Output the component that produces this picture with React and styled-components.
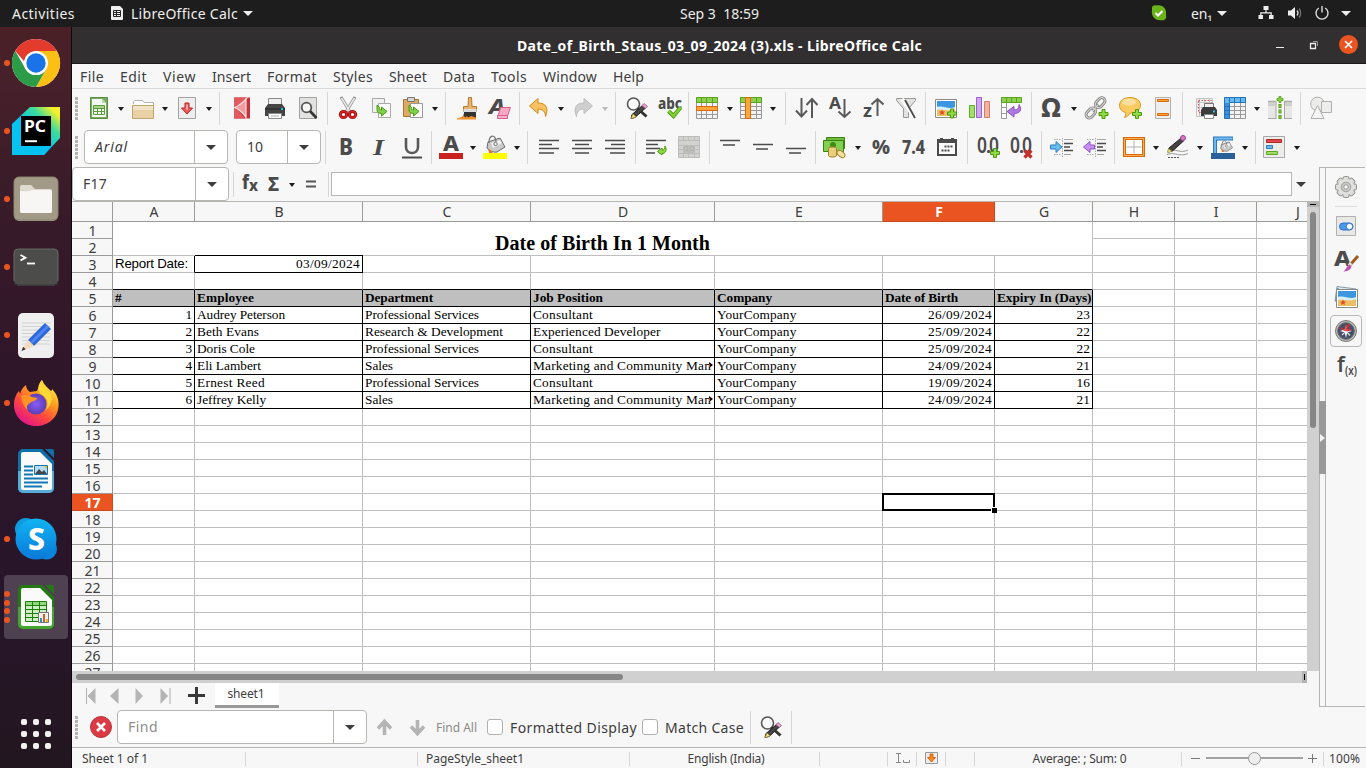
import React, { useLayoutEffect, useRef } from "react";
import styled, { createGlobalStyle, css } from "styled-components";

const UI = `"Noto Sans", "Open Sans", sans-serif`;
const ORANGE = "#e95420";
const INK = "#3d3d3d";
const EDGE = "#b6b6b3";

const Global = createGlobalStyle`
  * { box-sizing: border-box; }
  html, body { margin: 0; padding: 0; overflow: hidden; }
  body { font-family: ${UI}; font-size: 14px; color: ${INK}; background: #f7f7f7; }
  svg { display: block; flex: none; overflow: visible; }
`;

/* Text whose tracking is adjusted so that it fills a given width. */
const LabelText = styled.span`
  display: inline-block;
  flex: none;
  white-space: pre;
`;
function Label({ w, children, className }) {
  const ref = useRef(null);
  useLayoutEffect(() => {
    const el = ref.current;
    el.style.letterSpacing = "0px";
    const n = Array.from(el.textContent).length;
    const natural = el.getBoundingClientRect().width;
    const step = (w - natural) / n;
    el.style.letterSpacing = `${step}px`;
  }, [w, children]);
  return <LabelText ref={ref} className={className}>{children}</LabelText>;
}

/* ---------- frame ---------- */
const Screen = styled.div`
  width: 1366px; height: 768px; display: flex; flex-direction: column; overflow: hidden; background: #f7f7f7;
`;
const Gap = styled.div`flex: none; width: ${(p) => p.$w}px;`;
const Spring = styled.div`flex: 1;`;
const TopBar = styled.header`
  height: 27px; flex: none; display: flex; align-items: center; background: #1d1d1d; color: #eeeeec; padding: 0 15px 1px 12px;
`;
const Below = styled.div`flex: 1; display: flex; min-height: 0;`;
const Dock = styled.nav`
  width: 72px; flex: none; display: flex; flex-direction: column; padding-top: 2px; border-right: 1px solid #0d060c;
  background: linear-gradient(#4a2026 0, #46202a 60px, #391b29 170px, #2f1629 350px, #2b162a 480px, #27152a 560px, #241622 700px, #22171f 741px);
`;
const DockItem = styled.div`
  height: 68px; flex: none; position: relative; display: flex; align-items: center; justify-content: center;
`;
const DockTile = styled.div`
  width: 64px; height: 64px; border-radius: 4px; display: flex; align-items: center; justify-content: center;
  background: ${(p) => (p.$active ? "rgba(255,255,255,0.19)" : "transparent")};
`;
const Dots = styled.div`
  position: absolute; left: 4px; top: 0; bottom: 0; display: flex; flex-direction: column; justify-content: center; gap: 2.7px;
  i { width: 6px; height: 6px; border-radius: 50%; background: ${ORANGE}; }
`;
const AppsGrid = styled.div`
  margin: auto auto 19px; display: grid; grid-template-columns: repeat(3, 6px); grid-auto-rows: 6px; gap: 6px;
  i { background: #f2f1f0; border-radius: 2px; }
`;
const Win = styled.main`flex: 1; min-width: 0; display: flex; flex-direction: column;`;
const TitleBar = styled.div`
  height: 37px; flex: none; display: grid; grid-template-columns: 1fr auto 1fr; align-items: center; background: #322f30;
  border-bottom: 1px solid #1b1b1b; color: #fff; font-weight: 700; font-size: 14px; padding-left: 1px;
`;
const WinButtons = styled.div`display: flex; justify-content: flex-end; align-items: center; padding-right: 8px; padding-bottom: 1px;`;
const CloseDot = styled.div`
  width: 19px; height: 19px; border-radius: 50%; background: ${ORANGE}; display: grid; place-items: center;
`;
const MenuBar = styled.div`
  height: 25px; flex: none; display: flex; align-items: center; gap: 16px; padding-left: 8px; border-bottom: 1px solid #dadad8; font-size: 14px;
`;

/* ---------- toolbars ---------- */
const Toolbar = styled.div`
  height: ${(p) => p.$h}px; flex: none; display: flex; align-items: center; padding-bottom: ${(p) => p.$pb || 0}px;
`;
const Handle = styled.div`
  width: 3px; height: 23px; flex: none; margin: 0 ${(p) => p.$after}px 0 3px;
  background: repeating-linear-gradient(#b4b4b2 0 3px, transparent 3px 4px);
`;
const Btn = styled.div`
  width: ${(p) => p.$w || 33}px; height: 30px; flex: none; display: flex; align-items: center; justify-content: center;
`;
const ArrowBox = styled.div`
  width: ${(p) => p.$w || 11}px; flex: none; display: flex; justify-content: center; padding-top: 2px;
  &::before {
    content: ""; border: solid transparent; border-width: 4px 3.5px 0; border-top-color: ${(p) => (p.$off ? "#b9b9b9" : "#1c1c1c")};
  }
`;
const SepBox = styled.div`
  width: ${(p) => p.$w}px; height: ${(p) => p.$h || 33}px; flex: none; display: flex; justify-content: center;
  &::before { content: ""; width: 1px; height: 100%; background: #d6d6d4; }
`;
const Caret = styled.i`
  flex: none; border: solid transparent; border-width: 5px 5px 0; border-top-color: ${(p) => p.$c || INK};
`;
const Combo = styled.div`
  width: ${(p) => p.$w}px; height: 34px; flex: none; display: flex; background: #fff; border: 1px solid ${EDGE}; border-radius: 4px;
`;
const ComboText = styled.div`
  flex: 1; display: flex; align-items: center; padding: 0 0 1px 10px; color: ${(p) => (p.$hint ? "#8e8e8e" : INK)};
  font-style: ${(p) => (p.$italic ? "italic" : "normal")};
`;
const ComboArrow = styled.div`
  width: ${(p) => p.$w || 33}px; display: flex; align-items: center; justify-content: center; border-left: 1px solid ${EDGE};
`;
const FormulaInput = styled.div`
  flex: none; width: 961px; height: 24px; background: #fff; border: 1px solid ${EDGE};
`;

/* ---------- sheet ---------- */
const Middle = styled.div`flex: none; height: 542px; display: flex;`;
const Left = styled.div`width: 1247px; flex: none; display: flex; flex-direction: column;`;
const SheetArea = styled.div`height: 470px; display: flex; border-top: 1px solid ${EDGE};`;
const SheetGrid = styled.div`
  width: 1235px; height: 469px; overflow: hidden; display: grid; background: #fff;
  grid-template-columns: 41px 82px 168px 168px 184px 168px 112px 98px 82px 82px 82px;
  grid-template-rows: 20px; grid-auto-rows: 17px;
`;
const Head = styled.div`
  display: flex; align-items: center; justify-content: center; font-size: 14px; line-height: 16px; overflow: hidden; padding: 1px 0 0 1px;
  background: ${(p) => (p.$on ? ORANGE : "#f7f7f7")}; color: ${(p) => (p.$on ? "#fff" : INK)}; font-weight: ${(p) => (p.$on ? 700 : 400)};
  border-right: 1px solid ${(p) => (p.$on ? "#c94a1e" : "#9a9a98")}; border-bottom: 1px solid ${(p) => (p.$on ? "#c94a1e" : "#9a9a98")};
`;
const Cell = styled.div`
  position: relative; display: flex; align-items: center; white-space: pre; min-width: 0;
  justify-content: ${(p) => (p.$right ? "flex-end" : "flex-start")};
  padding: 0 2px 1px; font: ${(p) => (p.$bold ? 700 : 400)} 13.33px/16px "Liberation Serif", serif; color: #000;
  background: ${(p) => (p.$bold ? "#bfbfbf" : "#fff")};
  border-right: 1px solid ${(p) => (p.$rb ? "#000" : "#bfbfbf")};
  border-bottom: 1px solid ${(p) => (p.$bb ? "#000" : "#bfbfbf")};
  ${(p) => p.$topLine && css`box-shadow: 0 -1px #000;`}
  ${(p) => p.$sans && css`font-family: "Liberation Sans", sans-serif;`}
`;
const Overflow = styled.i`
  position: absolute; right: 1px; top: 4px; border: solid transparent; border-width: 3.5px 0 3.5px 4px; border-left-color: #000;
  &::before { content: ""; position: absolute; left: -4px; top: -1px; width: 1px; height: 3px; background: #d33; }
`;
const Merged = styled.div`
  grid-column: 2 / 9; grid-row: 2 / 4; display: flex; align-items: flex-end; justify-content: center;
  border-right: 1px solid #bfbfbf; border-bottom: 1px solid #bfbfbf;
  font: 700 20px/24px "Liberation Serif", serif; color: #000;
`;
const Cursor = styled.div`
  position: absolute; z-index: 2; left: -1px; top: -1px; width: 113px; height: 18px; border: 2px solid #000;
  &::after {
    content: ""; position: absolute; right: -4px; bottom: -4px; width: 5px; height: 5px; background: #000; box-shadow: -1px -1px 0 #fff;
  }
`;
const VScroll = styled.div`
  width: 12px; background: #d0d0d0; display: flex; flex-direction: column; align-items: center;
  &::before { content: ""; width: 100%; height: 5px; background: linear-gradient(#000, #000) center 2px / 6px 1px no-repeat #b4b4b4; }
  &::after { content: ""; margin: 5px 0 0; width: 6px; height: 216px; border-radius: 3px; background: #868686; }
`;
const HScroll = styled.div`
  width: 1235px; height: 12px; background: #d0d0d0; display: flex; align-items: center; justify-content: space-between; padding-left: 4px;
  &::before { content: ""; width: 547px; height: 6px; border-radius: 3px; background: #868686; }
  &::after { content: ""; width: 5px; height: 12px; background: linear-gradient(#000, #000) 2px center / 1px 6px no-repeat #b4b4b4; }
`;
const Tabs = styled.div`height: 25px; display: flex; align-items: center;`;
const Tab = styled.div`
  width: 64px; height: 25px; background: #fff; border-bottom: 3px solid #999; display: flex; align-items: center; justify-content: center; font-size: 12px;
  padding: 0 2px 1px 0;
`;
const Splitter = styled.div`
  width: 7px; height: 540px; flex: none; border: 1px solid ${EDGE}; padding-top: 233px;
`;
const Grip = styled.div`
  height: 73px; margin: 0 -1px; background: #999; display: flex; align-items: center; padding-left: 1px;
  &::before { content: ""; border: solid transparent; border-width: 4px 0 4px 5px; border-left-color: #f4f4f4; }
`;
const Sidebar = styled.aside`
  width: 39px; height: 540px; flex: none; border-top: 1px solid ${EDGE}; border-bottom: 1px solid ${EDGE};
  display: flex; flex-direction: column; align-items: center; padding: 3px 0 0 0;
`;
const SideBtn = styled.div`
  width: 32px; height: 32px; flex: none; margin-bottom: ${(p) => p.$mb ?? 3}px; border-radius: 4px; display: grid; place-items: center;
  border: 1px solid ${(p) => (p.$on ? "#b9b9b7" : "transparent")};
`;
const SideLine = styled.div`width: 22px; height: 1px; background: #dcdcda; margin: 0 0 3px;`;
const Check = styled.i`width: 16px; height: 16px; flex: none; border: 1px solid #b0b0ae; border-radius: 3px; background: #fff;`;
const FindAll = styled.div`font-size: 12px; color: #8c8c8a; display: flex;`;
const StatusBar = styled.footer`
  flex: 1; display: flex; align-items: stretch; border-top: 1px solid ${EDGE}; font-size: 12px; padding-top: 1px;
`;
const Stat = styled.div`
  width: ${(p) => p.$w}px; flex: none; display: flex; align-items: center; justify-content: ${(p) => (p.$c ? "center" : "flex-start")};
  padding-left: ${(p) => p.$pl || 0}px; background: linear-gradient(#d6d6d4, #d6d6d4) right center / 1px 14px no-repeat; padding-bottom: 1px;
`;
const StatEnd = styled.div`display: flex; align-items: center; padding-bottom: 1px;`;
const Slider = styled.div`
  width: 97px; height: 2px; background: #a3a3a1; margin: 0 5px; display: flex; align-items: center; justify-content: center;
  &::before { content: ""; width: 11px; height: 11px; border-radius: 50%; border: 1px solid #999; background: #efefef; }
`;

/* ---------- icons ---------- */
const Svg = ({ s = 24, children, h }) => (
  <svg width={s} height={h || s} viewBox={`0 0 ${s} ${h || s}`} fill="none">{children}</svg>
);
/* A letter used as an icon: t is the letter, x its left side, w the width it fills. */
const Char = ({ t, x = 0, y = 19, w, size = 22, weight = 800, family = "Noto Sans", italic, fill = "#4b4b4b" }) => (
  <text x={x} y={y} fontFamily={family} fontWeight={weight} fontSize={size} fontStyle={italic ? "italic" : "normal"} fill={fill}
    textLength={w} lengthAdjust="spacingAndGlyphs">{t}</text>
);
const Plus = ({ x = 13, y = 13 }) => (
  <path transform={`translate(${x} ${y})`} d="M3.5.5h3v3h3v3h-3v3h-3v-3h-3v-3h3z" fill="#8fd94a" stroke="#4e9a06" />
);
const Page = ({ children, f = "#eee" }) => (
  <><path d="M3.5 1.5h17v21h-17z" fill={f} stroke="#a2a2a0" />{children}</>
);
const INew = () => <Svg><path d="M3.500 1.500h17v21h-17z" fill="#7da968" stroke="#568f3e" /><path d="M5 3h10l4 4v14H5z" fill="#f4f8f2" /><path d="M15 3v4h4z" fill="#b9d8a8" /><path d="M6.500 9.500h11v9h-11zM6.500 12.500h11M6.500 15.500h11M10.500 9.500v9M14.500 9.500v9" stroke="#5a9e3c" /><path d="M7 10h10v2H7z" fill="#a5d489" /></Svg>;
const IOpen = () => <Svg><path d="M2.500 8V5.500l1-1h8l1.500 2h9.500V12" fill="#fff" stroke="#b5b3ae" /><path d="M1.500 9.500h21v13h-21z" fill="#e9d1a6" stroke="#c0a470" /><path d="M2 10h20v4H2z" fill="#f3e3c6" /></Svg>;
const ISave = () => <Svg><Page><path d="M10 7h4v5h3.500L12 18l-5.500-6H10z" fill="#ef5a5a" stroke="#b82020" /><path d="M11 8.500h2v5h-2z" fill="#f9a0a0" /></Page></Svg>;
const IPdf = () => <Svg><path d="M4 1.500h16v21H4z" fill="#c4333c" /><path d="M4 1.500h13L6 12l9 10.500H4z" fill="#e2595f" /><path d="M16 2L5 11.500 16 21z" fill="#f29a9c" /><path d="M17.500 1.500C14 6 9 10 4.500 11.500 9 12.500 14 18 16.500 22.500M16 2v19" stroke="#fbe3e3" strokeWidth="1.200" /></Svg>;
const IPrint = () => <Svg><path d="M5.500 2.500h13v8h-13z" fill="#eee" stroke="#888" /><path d="M5 8h14l3 4v8H2v-8z" fill="#444" /><path d="M2 12h20v2H2z" fill="#333" /><path d="M18 12h2v2h-2z" fill="#1ec6ee" /><path d="M5.500 17.500h13v5h-13z" fill="#fff" stroke="#888" /><path d="M8 20h8" stroke="#aaa" /></Svg>;
const IPreview = () => <Svg><Page f="#e2e2e0"><circle cx="10.500" cy="11.500" r="4.800" fill="#f7f7f7" stroke="#555" strokeWidth="1.800" /><path d="M14 15l6.500 7" stroke="#333" strokeWidth="2.600" /></Page></Svg>;
const ICut = () => <Svg><path d="M5 1l9 15M19 1l-9 15" stroke="#8d8d8d" strokeWidth="3" /><path d="M5.500 2l8 13M18.500 2l-8 13" stroke="#e9e9e9" strokeWidth="1.500" /><ellipse cx="7.500" cy="18.500" rx="3.200" ry="3" stroke="#a80f0f" strokeWidth="3" /><ellipse cx="16.500" cy="18.500" rx="3.200" ry="3" stroke="#a80f0f" strokeWidth="3" /><ellipse cx="7.500" cy="18.500" rx="3.200" ry="3" stroke="#dc2a2a" strokeWidth="1.200" /><ellipse cx="16.500" cy="18.500" rx="3.200" ry="3" stroke="#dc2a2a" strokeWidth="1.200" /></Svg>;
const CopyArrow = () => <path d="M8 9v4.500c0 2.500 1.500 4 4.500 4V20l5.500-4.500-5.500-4.500v3c-1.500 0-2-.5-2-2.500z" fill="#7fd24a" stroke="#469a12" />;
const ICopy = () => <Svg><path d="M3.500 2.500h12v14h-12z" fill="#f1f1f1" stroke="#a8a8a6" /><path d="M9.500 7.500h12v14h-12z" fill="#fff" stroke="#a8a8a6" /><CopyArrow /></Svg>;
const IPaste = () => <Svg><path d="M2.500 3.500h15v17h-15z" fill="#dcaa62" stroke="#a87533" /><path d="M6.500 1.500h7v4h-7z" fill="#d5d5d3" stroke="#777" /><path d="M9.500 7.500h12v14h-12z" fill="#fff" stroke="#999" /><CopyArrow /></Svg>;
const IBrush = () => <Svg><path d="M13.500 1.500h3l.5 9h4.500v5h-13v-5H13z" fill="#e9b56e" stroke="#b27a2d" /><path d="M8.500 13h13v3h-13z" fill="#ddd" /><path d="M9 16h12v6c-6 1-10 0-17 .5 4-1 5-3 5-6.500z" fill="#333" /><path d="M2 22.500c5-1 7-3 7-3l1 2 2-1.500 1 1.500 3-1.500 5 1.500v2H2z" fill="#f0912c" /></Svg>;
const IClear = () => <Svg><Char t="A" x={1} y={18} size={22} w={16} italic /><path d="M12.500 11.500h10l-3 8.500h-9.500z" fill="#f9a7c3" stroke="#d6608c" /><path d="M9.500 19.500h10v3h-10z" fill="#f7b0c8" stroke="#d6608c" /></Svg>;
const IUndo = ({ off }) => <Svg><g transform={off ? "matrix(-1 0 0 1 24 0)" : undefined}><path d="M11 2.500v4.500c8 0 11 5 7.500 13.500 0-5-3-7.500-7.500-7.500v4.500L2.500 10z" fill={off ? "#cfcfcf" : "#f9c064"} stroke={off ? "#bdbdbd" : "#d18a14"} /></g></Svg>;
const IRefind = () => <Svg><circle cx="8.500" cy="8" r="6" fill="#fafafa" stroke="#555" strokeWidth="1.600" /><path d="M12.500 12.500l9 8" stroke="#333" strokeWidth="3" /><path d="M18 9l3 2.500-11 10-4 1 1-4z" fill="#444" stroke="#222" /><path d="M19 7.500l3.500 3-2 2-3.500-3z" fill="#e6a4cf" stroke="#b069a0" /><path d="M8 18l3 3-5 1.500z" fill="#f5e58a" stroke="#a18d2d" strokeWidth=".6" /></Svg>;
const ISpell = () => <Svg><Char t="abc" x={0} y={13} size={16} w={24} /><path d="M10.500 15l5 5 7-8.500" stroke="#4e9a06" strokeWidth="4" /><path d="M10.500 15l5 5 7-8.500" stroke="#82d13c" strokeWidth="2.200" /></Svg>;
const Mesh = ({ c = "#999" }) => <><path d="M1.500 1.500h21v21h-21z" fill="#f3f3f3" stroke={c} /><path d="M1.500 6.500h21M1.500 10.500h21M1.500 14.500h21M1.500 18.500h21M6.500 1.500v21M11.500 1.500v21M17.500 1.500v21" stroke={c} /></>;
const IRow = () => <Svg><Mesh /><path d="M1.500 1.500h21v5h-21z" fill="#8bd052" stroke="#5aa41c" /><path d="M6.500 2v4M11.500 2v4M17.500 2v4" stroke="#5aa41c" /><path d="M1.500 10.500h21v4h-21z" fill="#fca53a" stroke="#d9690a" /></Svg>;
const ICol = () => <Svg><Mesh /><path d="M1.500 1.500h21v5h-21z" fill="#8bd052" stroke="#5aa41c" /><path d="M6.500 2v4M17.500 2v4" stroke="#5aa41c" /><path d="M6.500 1.500h5v21h-5z" fill="#fca53a" stroke="#d9690a" /></Svg>;
const ISort = () => <Svg><path d="M6.500 2v18M1 14.500l5.500 6 5.500-6M17 22V3M11.500 9L17 3l5.500 6" stroke="#5a5a5a" strokeWidth="2" /></Svg>;
const IAz = () => <Svg><Char t="A" x={1} y={13} size={16} weight={700} w={12} /><path d="M16.500 3v18M10.500 15.500l6 5.500 6-5.500" stroke="#5a5a5a" strokeWidth="2" /></Svg>;
const IZa = () => <Svg><Char t="z" x={1} y={21} size={18} weight={700} w={9} /><path d="M15.500 20V3M9.500 8.500l6-5.500 6 5.500" stroke="#5a5a5a" strokeWidth="2" /></Svg>;
const IFilter = () => <Svg><path d="M2.500 2.500h19v2l-7 8v9h-5v-9l-7-8z" fill="#e2e2e0" stroke="#989896" /><path d="M8 3l13 19" stroke="#fff" strokeWidth="4" /><path d="M11 4l10 18" stroke="#4b4b4b" strokeWidth="1.800" /></Svg>;
const Photo = () => <><path d="M1.500 3.500h21v18h-21z" fill="#fff" stroke="#8a8a88" /><path d="M3 5h18v7H3z" fill="#3d96e0" /><path d="M3 11c6-2 12 3 18 0v3H3z" fill="#d5f0f8" /><path d="M3 14c5-1 12 2 18-1v7H3z" fill="#edbe68" /><path d="M8 13.500l1 2h2L9.500 17l.5 2-2-1-2 1 .5-2L5 15.500h2z" fill="#e3501d" /></>;
const IImage = () => <Svg><Photo /><Plus x={13} y={12.500} /></Svg>;
const IChart = () => <Svg><path d="M2.500 9.500h5v12h-5z" fill="#a3e06b" stroke="#62b02a" /><path d="M9.500 1.500h5v20h-5z" fill="#cfa4f0" stroke="#9a5fd0" /><path d="M17.500 5.500h5v16h-5z" fill="#f3b3a4" stroke="#d47e69" /></Svg>;
const IPivot = () => <Svg><path d="M1.500 6.500h5v16h-5zM1.500 11.500h5M1.500 17.500h5" fill="#fff" stroke="#999" /><path d="M1.500 1.500h20v5h-20zM6.500 2v4M11.500 2v4M16.500 2v4" fill="#8bd052" stroke="#5aa41c" /><path d="M19 8.500c4 6 0 9-5 9V21l-7-5.500 7-5v3.500c3 0 5-1 5-5.500z" fill="#b07be0" stroke="#8a4fc4" /></Svg>;
const ILink = () => <Svg><g transform="rotate(-48 10 12)"><g stroke="#868684" strokeWidth="3"><rect x="-2" y="9" width="11" height="6.500" rx="3.200" /><rect x="12" y="9" width="11" height="6.500" rx="3.200" /><path d="M6 12.200h9" /></g><g stroke="#dcdcda" strokeWidth="1"><rect x="-2" y="9" width="11" height="6.500" rx="3.200" /><rect x="12" y="9" width="11" height="6.500" rx="3.200" /><path d="M6 12.200h9" /></g></g><Plus x={13.500} y={13} /></Svg>;
const IComment = () => <Svg><path d="M12 1.500c6 0 10.500 3 10.500 7.500s-4 8-10 8c-2 3-5 4.500-6 4.500 1-1.500 1.500-3.500 1-5C4 15.500 1.500 13 1.500 9.500c0-5 4.500-8 10.500-8z" fill="#fbcb62" stroke="#d99a22" /><ellipse cx="11" cy="6" rx="7" ry="3.500" fill="#fde0a0" /><Plus x={14} y={13} /></Svg>;
const IHeader = () => <Svg><path d="M4.500 1.500h15v21h-15z" fill="#eee" stroke="#b0b0ae" /><path d="M6.500 3.500h11v2h-11zM6.500 17.500h11v2h-11z" fill="#fca53a" stroke="#d9690a" /></Svg>;
const IPrintArea = () => <Svg><path d="M2.500 2.500h16v18h-16zM5.500 3v17M10.500 3v17M15.500 3v8M3 6.500h15M3 11.500h8" stroke="#c4c4c2" fill="#f2f2f0" /><path d="M4.500 4.500h13v12h-13z" stroke="#e05050" strokeDasharray="1.500 1.500" /><path d="M10.500 7.500h9v5h-9z" fill="#eee" stroke="#777" /><path d="M9 11h12l2 3v6H7v-6z" fill="#3c3c3c" /><path d="M19 14.500h2v2h-2z" fill="#1ec6ee" /><path d="M10.500 18.500h9v4h-9z" fill="#fff" stroke="#888" /></Svg>;
const IFreeze = () => <Svg><Mesh /><path d="M1.500 22.500v-21h21v5h-16v16z" fill="#66b8ef" stroke="#2273b8" /><path d="M2 7h4v15H2z" fill="#3f8fe0" /><path d="M2 10.500h4M2 14.500h4M2 18.500h4M11.500 2v4M17.500 2v4M6.500 2v4" stroke="#2273b8" /></Svg>;
const ISplit = () => <Svg><path d="M0 4h8v19H0zM16 4h8v19h-8z" fill="#e6e6e4" /><path d="M0 5.500h8M16 5.500h8M0 22.500h8M16 22.500h8M8 5v18M16.500 5v18" stroke="#a8a8a6" /><path d="M0 6h7v4H0zM17 6h7v4h-7z" fill="#cfcfcd" /><path d="M12 8v15" stroke="#4e9a06" strokeWidth="3" strokeDasharray="4 1.500" /><path d="M12 8.700v14" stroke="#8fd94a" strokeWidth="1.200" strokeDasharray="2.600 2.900" /><path d="M11 .5h2v2h2v2h-2v2h-2v-2H9v-2h2z" fill="#8fd94a" stroke="#4e9a06" strokeWidth=".8" /></Svg>;
const IShapes = () => <Svg><circle cx="8.500" cy="8" r="6.800" fill="#ececea" stroke="#b0b0ae" /><path d="M12.500 5.500h10v11h-10z" fill="#ededed" stroke="#b0b0ae" /><path d="M8.500 9.500L15 22.500H2z" fill="#f4f4f4" stroke="#b0b0ae" /></Svg>;

const IBold = () => <Svg><Char t="B" x={4} y={20} size={23} w={14} /></Svg>;
const IItalic = () => <Svg><Char t="I" x={6} y={20} size={24} w={11} weight={700} family="Liberation Serif" italic /></Svg>;
const IUnderline = () => <Svg><path d="M6 3v9c0 8 12 8 12 0V3" stroke="#5a5a5a" strokeWidth="2.600" /><path d="M2 22.500h20" stroke="#4b4b4b" strokeWidth="2" /></Svg>;
const IPercent = () => <Svg><Char t="%" x={3} y={19} size={20} w={18} /></Svg>;
const INumber = () => <Svg><Char t="7.4" x={0} y={19} size={20} w={23} /></Svg>;
const IOmega = () => <Svg><Char t="Ω" x={2} y={21} size={26} w={20} /></Svg>;
const ISigma = () => <Svg s={20}><Char t="Σ" x={4} y={17} size={19} w={11} /></Svg>;
const IFontColor = () => <Svg><Char t="A" x={4} y={16} size={22} w={16} /><path d="M0 18h24v6H0z" fill="#c9211e" /></Svg>;
const Bucket = () => <><path d="M5 7l12-4 5 9-8 5c-3 1-9-2-10-4z" fill="#c9c9c9" stroke="#6b6b6b" /><path d="M8 8l9-3 2 3-9 5z" fill="#f1f1f1" /><path d="M6 8C6-1 13-1 13 7" stroke="#777" strokeWidth="1.300" /><circle cx="12.500" cy="9" r="1.700" fill="#eee" stroke="#777" /><path d="M5 13l5 5H6z" fill="#e9742b" /></>;
const IFill = () => <Svg><Bucket /><path d="M0 18h24v6H0z" fill="#ff0" /></Svg>;
const Bars = ({ d }) => <Svg><path d={d} stroke="#4b4b4b" strokeWidth="1.600" /></Svg>;
const IWrap = () => <Svg><path d="M2 5.500h20M2 9.500h12M2 13.500h14M2 18h9" stroke="#4b4b4b" strokeWidth="1.600" /><path d="M21 11c2.500 4 .5 7.500-3 7.500V20l-4.500-3.500L18 13v2c2 0 3-1 3-4z" fill="#8fd94a" stroke="#4e9a06" /></Svg>;
const IMerge = () => <Svg><path d="M1.500 1.500h21v21h-21z" fill="#d2d2d0" stroke="#bcbcba" /><path d="M2 5.500h20M2 18.500h20M6.500 2v4M11.500 2v4M17.500 2v4M6.500 18v4M11.500 18v4M17.500 18v4M2 10.500h4M2 14.500h4M18 10.500h4M18 14.500h4" stroke="#bcbcba" /><path d="M6 10h12v8H6z" fill="#bdbdbb" /><path d="M10 11v5l-3-2.500zM14 11v5l3-2.500z" fill="#cfcfcd" stroke="#a2a2a0" strokeWidth=".6" /></Svg>;
const IMoney = () => <Svg><path d="M4.500 2.500h18v11h-18z" fill="#6cbd3c" stroke="#3a8212" /><path d="M1.500 5.500h20v11h-20z" fill="#82cf52" stroke="#3a8212" /><circle cx="11" cy="10" r="3" fill="#3f8a18" /><path d="M6.500 13.500c0-2 8-2 8 0v7c0 2-8 2-8 0z" fill="#e9cf7c" stroke="#a5822a" /><ellipse cx="19" cy="19" rx="4.500" ry="2.700" transform="rotate(38 19 19)" fill="#f4e1a0" stroke="#a5822a" /></Svg>;
const IDate = () => <Svg><path d="M2 4h3V3h3v1h8V3h3v1h3v17H2z" fill="#4b4b4b" /><path d="M4 8h16v11H4z" fill="#fafafa" /><path d="M9.500 11.500h8M6.500 15.500h8" stroke="#4b4b4b" strokeWidth="2" strokeDasharray="2 1" /></Svg>;
const Dec = ({ children }) => <Svg><Char t="0" x={1} y={18} size={22} weight={600} w={10} /><Char t="." x={10} y={18} size={18} weight={700} /><Char t="0" x={13} y={18} size={22} weight={600} w={10} />{children}</Svg>;
const IDecAdd = () => <Dec><Plus x={14} y={13} /></Dec>;
const IDecDel = () => <Dec><path d="M15.500 15.500l7 7M22.500 15.500l-7 7" stroke="#c4302c" strokeWidth="3.200" /></Dec>;
const IIndent = ({ out }) => <Svg><path d="M14 4.500h9M14 19.500h7" stroke="#a5a5a3" /><path d="M14 8.500h9M14 12h6M14 15.500h9" stroke="#4b4b4b" strokeWidth="1.700" /><path d="M4 4.500h7M4 19.500h7M12.500 3v19" stroke="#aaa" strokeDasharray="1.500 1" /><path d={out ? "M11.500 10v4H7v3.500L.5 12 7 6.500V10z" : "M.5 10v4H6v3.500l6-5.500-6-5.500V10z"} fill={out ? "#c58ff0" : "#66bdf0"} stroke={out ? "#9350c8" : "#2d7fbe"} /></Svg>;
const IBorder = () => <Svg><path d="M2.500 3.500h19v17h-19z" fill="#fff" stroke="#d9690a" strokeWidth="3" /><path d="M2.500 3.500h19v17h-19z" stroke="#fcb055" strokeWidth="1" /><path d="M12 5.500v13M4.500 12h15" stroke="#b0b0ae" /></Svg>;
const IPen = () => <Svg><path d="M2 16c8-3 12 3 20-1M1 19.500c8-3 13 3 21-1" stroke="#999" /><path d="M2 22.500h12" stroke="#555" strokeDasharray="2 1" /><path d="M14.500 3.500l3 2.500L6.500 16 2 17l1-4z" fill="#444" stroke="#222" /><circle cx="17" cy="3" r="2.500" fill="#d877c4" stroke="#97438a" /><path d="M2.500 13.500l3.500 3-4.500 1z" fill="#f5e58a" stroke="#a18d2d" strokeWidth=".6" /></Svg>;
const IBorderColor = () => <Svg><path d="M4 19V3.500h18" stroke="#2879c0" strokeWidth="4" /><path d="M4 18V3.500h17.500" stroke="#75bdf0" strokeWidth="1.800" /><g transform="translate(7 5) scale(.66)"><Bucket /></g><path d="M0 18h24v6H0z" fill="#2a6099" /></Svg>;
const ICond = () => <Svg><path d="M1.500 1.500h21v21h-21z" fill="#ececea" stroke="#a8a8a6" /><path d="M4.500 4.500h15v3h-15z" fill="#d94b4b" stroke="#b02a2a" /><path d="M4.500 10.500h6v3h-6z" fill="#6bb7e8" stroke="#2d7fbe" /><path d="M4.500 16.500h11v3h-11z" fill="#a3dc6a" stroke="#5aa41c" /></Svg>;

const gearTeeth = Array.from({ length: 8 }, (_, i) => <rect key={i} x="9" y="1.500" width="6" height="6" rx="1.500" transform={`rotate(${i * 45} 12 12)`} fill="#dcdcda" stroke="#8f8f8d" />);
const IGear = () => <Svg>{gearTeeth}<circle cx="12" cy="12" r="8.300" fill="#e0e0de" /><circle cx="12" cy="12" r="4.800" fill="#c8c8c6" stroke="#a0a09e" /><circle cx="12" cy="12" r="2.200" fill="#f7f7f7" stroke="#999" /></Svg>;
const IProps = () => <Svg><path d="M2.500 2.500h19v19h-19z" fill="#e8e8e6" stroke="#b0b0ae" /><rect x="5.500" y="9" width="13.500" height="7" rx="3.500" fill="#4a98ee" stroke="#2a72c8" /><circle cx="15.500" cy="12.500" r="3.200" fill="#fff" stroke="#2a72c8" /></Svg>;
const IStyles = () => <Svg><Char t="A" x={0} y={17} size={22} w={17} /><path d="M24 7l-8 9" stroke="#9c5a1c" strokeWidth="3" /><path d="M17 14l-2 3" stroke="#ddd" strokeWidth="3.500" /><path d="M15.500 15.500l2 2c-1 4-5 5-8 5 2-1 3-5 6-7z" fill="#c050b0" /></Svg>;
const IGallery = () => <Svg><path d="M3 2.500L22 5l-2 14L1 17z" fill="#dfe9ee" stroke="#8a9aa4" /><path d="M4 4L2 17" stroke="#3d96e0" strokeWidth="1.500" /><g transform="translate(1 2)"><Photo /></g></Svg>;
const ICompass = () => <Svg><circle cx="12" cy="12" r="10.500" fill="#bcbcba" stroke="#7a7a78" /><circle cx="12" cy="12" r="8.300" fill="#46506a" stroke="#666" /><path d="M12 6l1.300 4.500L18 12l-4.700 1.300L12 19l-1.300-5.700L6 12l4.700-1.500z" fill="#fff" /><path d="M12 12l3.500-7M5.500 8.500L12 12M12 12l5-1.500M12 5.500V12" stroke="#e02c2c" strokeWidth="1.400" /><path d="M8 16l4-4 4 4.500" stroke="#dfe3ec" strokeWidth="1.200" /></Svg>;
const IFx = () => <Svg><Char t="f" x={3} y={18} size={21} weight={600} /><Char t="(x)" x={11} y={21} size={12} weight={600} w={12} /></Svg>;

/* dock pictures */
const DChrome = () => (
  <Svg s={48}><circle cx="24" cy="24" r="24" fill="#fff" />
    <path d="M24 24L3.200 12A24 24 0 0 1 44.800 12z" fill="#e33b2e" />
    <path d="M24 12h20.800A24 24 0 0 1 24 48l10.400-18z" fill="#fcc015" />
    <path d="M3.200 12A24 24 0 0 0 24 48l10.400-18A12 12 0 0 1 13.600 30z" fill="#2d9c49" />
    <path d="M3.200 12h41.600L24 12v12H13.600z" fill="#e33b2e" />
    <circle cx="24" cy="24" r="12" fill="#fff" /><circle cx="24" cy="24" r="9.700" fill="#1a73e8" /></Svg>
);
const DPyCharm = () => (
  <Svg s={48}><defs><linearGradient id="pc" x1="0" y1="1" x2="1" y2="0"><stop offset=".45" stopColor="#07c3f2" /><stop offset=".7" stopColor="#3ddc9a" /><stop offset=".9" stopColor="#f3f02b" /></linearGradient></defs>
    <path d="M0 17L18 0h30v31L32 48H0z" fill="url(#pc)" /><path d="M0 17L17 9v31L0 48zM9 39h31l-8 9H0z" fill="#07c3f2" /><path d="M9 9h30v30H9z" fill="#000" />
    <Char t="PC" x={12} y={24.5} size={16.5} weight={700} w={22} fill="#fff" /><path d="M13 34.200h12" stroke="#fff" strokeWidth="2" /></Svg>
);
const DFiles = () => (
  <Svg s={48}><rect x="2" y="2" width="44" height="44" rx="5" fill="#a09a86" /><rect x="2" y="2" width="44" height="43" rx="5" stroke="#8a8470" /><path d="M8 12a2 2 0 0 1 2-2h9l4 4h15a2 2 0 0 1 2 2v20a2 2 0 0 1-2 2H10a2 2 0 0 1-2-2z" fill="#dedad0" /><path d="M8 16c4 0 9 1 12-1h18a2 2 0 0 1 2 2v19a2 2 0 0 1-2 2H10a2 2 0 0 1-2-2z" fill="#f7f6f4" /></Svg>
);
const DTerm = () => (
  <Svg s={48}><rect x="2" y="6" width="44" height="36" rx="4" fill="#4c4c4a" stroke="#686866" /><path d="M2 38a4 4 0 0 0 4 4h36a4 4 0 0 0 4-4" stroke="#2c2c2a" /><path d="M8.500 12l5 2.700-5 2.700" stroke="#fff" strokeWidth="1.800" /><path d="M15 20.500h8" stroke="#fff" strokeWidth="1.800" /></Svg>
);
const DEdit = () => (
  <Svg s={48}><rect x="6" y="2" width="36" height="45" rx="5" fill="#efefef" /><path d="M10 12h28M10 15.500h28M10 19h28M10 22.500h28M10 26h28M10 29.500h28M10 33h28" stroke="#d2d2d2" />
    <path d="M33 12l6 6-17 17-6-6z" fill="#2f66d8" /><path d="M35 14l2 2-17 17-2-2z" fill="#4c86f0" /><path d="M16 29l6 6-12.500 5z" fill="#f5d9bc" /><path d="M11.200 35.800l2.500 2.500-4.200 1.700z" fill="#333" /></Svg>
);
const DFirefox = () => (
  <Svg s={48}><defs><linearGradient id="ff" x1=".9" y1=".1" x2=".3" y2="1"><stop offset="0" stopColor="#fff44f" /><stop offset=".35" stopColor="#ff9a1f" /><stop offset=".65" stopColor="#ff4a3d" /><stop offset="1" stopColor="#e31587" /></linearGradient><radialGradient id="fp"><stop offset="0" stopColor="#8a5cf5" /><stop offset="1" stopColor="#5b3fb5" /></radialGradient></defs>
    <path d="M30 1c2 5 6 8 9 11 1-1 1-1 1-2 5 5 7 11 6.500 17C46 39 36 47 24 47S2 38 2 26c0-6 2-11 5-14l1 3c1-4 3-7 6-9 0 3 2 6 4 7l7-1c2-4 2-8 5-11z" fill="url(#ff)" />
    <circle cx="24" cy="25" r="10.500" fill="url(#fp)" /><path d="M30 1c-5 5-4 11-1 14 7 4 8 9 5 16 4-3 7-10 5-15s-8-8-9-15z" fill="#ffd935" /><path d="M9 17c4-2 8-1 11 1l5 1c0 3-5 3-7 5-3 2-4 4-2 7-5-3-6-9-7-14z" fill="#ff9422" /></Svg>
);
const Doc = ({ a, b, children }) => (
  <Svg s={48}><path d="M11 2h19l12 12v27a5 5 0 0 1-5 5H11a5 5 0 0 1-5-5V7a5 5 0 0 1 5-5z" fill={a} /><path d="M6 24h36v17a5 5 0 0 1-5 5H11a5 5 0 0 1-5-5z" fill={b} /><path d="M33 2h7a2 2 0 0 1 2 2v7z" fill={a} /><path d="M11 5h17l12 12v24a2 2 0 0 1-2 2H11a2 2 0 0 1-2-2V7a2 2 0 0 1 2-2z" fill="#fafafa" />{children}</Svg>
);
const DWriter = () => (
  <Doc a="#0f6fa8" b="#56aed8"><path d="M12 19.500h9M12 23.500h9M12 27.500h9M12 31.500h24M12 35.500h24M12 39.500h18" stroke="#1179b4" strokeWidth="2" /><path d="M22.500 18.500h13v9h-13z" fill="#b6dcf2" stroke="#1179b4" /><path d="M23 27l4-5 3 3 2-2 3 4z" fill="#444" /><path d="M32 19h3v3z" fill="#f6b41c" /></Doc>
);
const DSkype = () => (
  <Svg s={48}><defs><linearGradient id="sk" x1="0" y1="0" x2="0" y2="1"><stop offset="0" stopColor="#11b4f2" /><stop offset="1" stopColor="#0a78d8" /></linearGradient></defs>
    <circle cx="14" cy="14" r="11" fill="#0e9be0" /><circle cx="34.500" cy="34" r="10.500" fill="#0c84dc" /><circle cx="24" cy="24" r="20.500" fill="url(#sk)" /><Char t="S" x={16} y={35} size={31} w={17} fill="#fff" /></Svg>
);
const DCalc = () => (
  <Doc a="#237a14" b="#42a52f"><path d="M13.500 18.500h21v20h-21z" fill="#cdeec0" stroke="#1f7d0e" /><path d="M14 19h20v3H14z" fill="#8fd97a" /><path d="M13.500 22.500h21M13.500 26.500h21M13.500 30.500h21M13.500 34.500h21M20.500 18.500v20M27.500 18.500v20" stroke="#1f7d0e" /><path d="M26.500 29.500h10v10h-10z" fill="#f2f2f2" stroke="#777" /><path d="M28 35h2v4h-2z" fill="#2c8fd4" /><path d="M31 31h2v8h-2z" fill="#d9601a" /><path d="M34 36h2v3h-2z" fill="#f0b81c" /></Doc>
);

/* ---------- data ---------- */
const dock = [
  [DChrome, 1], [DPyCharm, 1], [DFiles, 1], [DTerm, 1], [DEdit, 1], [DFirefox, 1], [DWriter, 0], [DSkype, 1], [DCalc, 4],
];
const menus = [["File", 24], ["Edit", 27], ["View", 33], ["Insert", 39], ["Format", 50], ["Styles", 40], ["Sheet", 38], ["Data", 32], ["Tools", 36], ["Window", 54], ["Help", 31]];
const columns = ["A", "B", "C", "D", "E", "F", "G", "H", "I", "J"];
const headings = [["#", 7], ["Employee", 57], ["Department", 68], ["Job Position", 70], ["Company", 55], ["Date of Birth", 73], ["Expiry In (Days)", 94.5]];
const MARKETING = ["Marketing and Community Man", 178];
const PRO = ["Professional Services", 114];
const people = [
  [["1", 6.5], ["Audrey Peterson", 88], PRO, ["Consultant", 60], "26/09/2024", "23"],
  [["2", 6.5], ["Beth Evans", 62], ["Research & Development", 138], ["Experienced Developer", 127.5], "25/09/2024", "22"],
  [["3", 6.5], ["Doris Cole", 58], PRO, ["Consultant", 60], "25/09/2024", "22"],
  [["4", 6.5], ["Eli Lambert", 64], ["Sales", 28], MARKETING, "24/09/2024", "21"],
  [["5", 6.5], ["Ernest Reed", 68], PRO, ["Consultant", 60], "19/09/2024", "16"],
  [["6", 6.5], ["Jeffrey Kelly", 69], ["Sales", 28], MARKETING, "24/09/2024", "21"],
].map(([n, a, b, c, d, e]) => [n, a, b, c, ["YourCompany", 79.5], [d, 64], [e, 13.5]]);

const Tool = ({ icon: Icon, w, ...rest }) => <Btn $w={w}><Icon {...rest} /></Btn>;
const Dd = (p) => <ArrowBox $w={p.w} $off={p.off} />;
const Sep = ({ w = 8, h }) => <SepBox $w={w} $h={h} />;

function SheetRow({ n }) {
  const cells = [];
  for (let c = 0; c < 10; c++) {
    if (n <= 2 && c < 7) continue;
    const inTable = n >= 5 && n <= 11 && c < 7;
    const right = n > 5 && (c === 0 || c > 4);
    let content = null;
    if (n === 5 && c < 7) content = <Label w={headings[c][1]}>{headings[c][0]}</Label>;
    else if (inTable) {
      const [t, w] = people[n - 6][c];
      content = <Label w={w}>{t}</Label>;
      if (t.startsWith("Marketing")) content = <>{content}<Overflow /></>;
    } else if (n === 3 && c === 0) content = <Label w={73}>Report Date:</Label>;
    else if (n === 3 && c === 1) content = <Label w={64}>03/09/2024</Label>;
    cells.push(
      <Cell
        key={c}
        $right={right || (n === 3 && c === 1)}
        $bold={n === 5 && c < 7}
        $sans={n === 3 && c === 0}
        $topLine={n === 3 && c === 1}
        $rb={inTable || (n === 3 && c < 2)}
        $bb={inTable || (n === 4 && c < 7) || (n === 3 && c === 1)}
      >
        {content}
        {n === 17 && c === 5 && <Cursor />}
      </Cell>
    );
  }
  return (
    <>
      <Head $on={n === 17}>{n}</Head>
      {n === 1 && <Merged><Label w={215}>Date of Birth In 1 Month</Label></Merged>}
      {cells}
    </>
  );
}

export default function App() {
  return (
    <Screen>
      <Global />
      <TopBar>
        <Label w={63}>Activities</Label>
        <Gap $w={36} />
        <Svg s={12} h={14}><path d="M0 1a1 1 0 0 1 1-1h8l3 3v10a1 1 0 0 1-1 1H1a1 1 0 0 1-1-1z" fill="#eee" /><path d="M2.500 4.500h7v6h-7zM2.500 6.500h7M2.500 8.500h7M5.500 4.500v6" stroke="#222" /></Svg>
        <Gap $w={8} />
        <Label w={107}>LibreOffice Calc</Label>
        <Gap $w={5} /><Caret $c="#eee" />
        <Gap $w={427} />
        <Label w={79}>{"Sep 3  18:59"}</Label>
        <Spring />
        <Svg s={16}><path d="M1 3c0-2 2-3 4-2.500C12-1 16 4 15 10c1 3-1 6-4.500 5.200C4 16 0 11 1 5z" fill="#6bb31b" /><path d="M4.500 8l2.500 2.500L11.500 6" stroke="#fff" strokeWidth="2" /></Svg>
        <Gap $w={24} />
        <Label w={21}>en₁</Label><Gap $w={5} /><Caret $c="#eee" />
        <Gap $w={31} />
        <Svg s={16}><path d="M5.500 1h5v4h-5zM.5 10h4.500v4H.5zM11 10h4.500v4H11z" fill="#eee" /><path d="M8 5v3M2.800 10V7.800h10.400V10" stroke="#eee" strokeWidth="1.200" /></Svg>
        <Gap $w={13} />
        <Svg s={16}><path d="M1 5.500h3L8 2v12l-4-3.500H1z" fill="#eee" /><path d="M10 5.500c1.300 1.500 1.300 3.500 0 5" stroke="#ddd" strokeWidth="1.200" /><path d="M12 3.500c2.300 2.500 2.300 6.500 0 9" stroke="#777" strokeWidth="1.200" /></Svg>
        <Gap $w={11} />
        <Svg s={16}><path d="M4.800 3a6 6 0 1 0 6.400 0M8 1v6.500" stroke="#ddd" strokeWidth="1.400" /></Svg>
        <Gap $w={11} /><Caret $c="#eee" />
      </TopBar>
      <Below>
        <Dock>
          {dock.map(([Icon, dots], i) => (
            <DockItem key={i}>
              <DockTile $active={dots === 4}><Icon /></DockTile>
              <Dots>{Array.from({ length: dots }, (_, k) => <i key={k} />)}</Dots>
            </DockItem>
          ))}
          <AppsGrid>{Array.from({ length: 9 }, (_, i) => <i key={i} />)}</AppsGrid>
        </Dock>
        <Win>
          <TitleBar>
            <span />
            <Label w={405}>Date_of_Birth_Staus_03_09_2024 (3).xls - LibreOffice Calc</Label>
            <WinButtons>
              <Svg s={10}><path d="M1 7.500h8" stroke="#eee" /></Svg>
              <Gap $w={25} />
              <Svg s={9}><path d="M.5 3.500h5v5h-5z" stroke="#eee" strokeWidth="1.300" /><path d="M3 1.500h4.500V6" stroke="#999" /></Svg>
              <Gap $w={20} />
              <CloseDot><Svg s={9}><path d="M1 1l7 7M8 1L1 8" stroke="#fff" strokeWidth="1.600" /></Svg></CloseDot>
            </WinButtons>
          </TitleBar>
          <MenuBar>{menus.map(([t, w]) => <Label key={t} w={w}>{t}</Label>)}</MenuBar>

          <Toolbar $h={39} $pb={1}>
            <Handle $after={4} />
            <Tool icon={INew} /><Dd /><Tool icon={IOpen} /><Dd /><Tool icon={ISave} /><Dd />
            <Sep w={11} />
            <Tool icon={IPdf} /><Tool icon={IPrint} /><Tool icon={IPreview} />
            <Sep w={7} />
            <Tool icon={ICut} /><Tool icon={ICopy} /><Tool icon={IPaste} w={31} /><Dd w={13} />
            <Sep w={9} />
            <Tool icon={IBrush} /><Tool icon={IClear} />
            <Sep w={6} />
            <Tool icon={IUndo} /><Dd w={12} /><Tool icon={IUndo} off w={32} /><Dd off w={12} />
            <Sep w={9} />
            <Tool icon={IRefind} /><Tool icon={ISpell} />
            <Sep w={5} />
            <Tool icon={IRow} w={32} /><Dd w={13} /><Tool icon={ICol} w={30} /><Dd w={14} />
            <Sep w={10} />
            <Tool icon={ISort} /><Tool icon={IAz} w={34} /><Tool icon={IZa} /><Tool icon={IFilter} w={32} />
            <Sep w={7} />
            <Tool icon={IImage} /><Tool icon={IChart} /><Tool icon={IPivot} />
            <Sep w={7} />
            <Tool icon={IOmega} w={32} /><Dd w={13} />
            <Tool icon={ILink} /><Tool icon={IComment} /><Tool icon={IHeader} />
            <Sep w={7} />
            <Gap $w={3} />
            <Tool icon={IPrintArea} /><Tool icon={IFreeze} w={26} /><Gap $w={3} /><Dd w={12} /><Tool icon={ISplit} />
            <Sep w={8} />
            <Tool icon={IShapes} />
          </Toolbar>

          <Toolbar $h={39} $pb={1}>
            <Handle $after={6} />
            <Combo $w={144}><ComboText $italic><Label w={33}>Arial</Label></ComboText><ComboArrow><Caret /></ComboArrow></Combo>
            <Gap $w={8} />
            <Combo $w={85}><ComboText><Label w={16}>10</Label></ComboText><ComboArrow><Caret /></ComboArrow></Combo>
            <Sep w={9} />
            <Tool icon={IBold} /><Tool icon={IItalic} w={32} /><Tool icon={IUnderline} />
            <Sep w={6} />
            <Tool icon={IFontColor} /><Dd /><Tool icon={IFill} /><Dd />
            <Sep w={10} />
            <Btn><Bars d="M2 5.500h20M2 9.500h13M2 13.500h20M2 18h15" /></Btn>
            <Btn><Bars d="M2 5.500h20M5 9.500h14M2 13.500h20M5 18h14" /></Btn>
            <Btn><Bars d="M2 5.500h20M8 9.500h14M2 13.500h20M7 18h15" /></Btn>
            <Sep w={8} />
            <Tool icon={IWrap} /><Tool icon={IMerge} />
            <Sep w={8} />
            <Btn><Bars d="M2 5.500h20M5 10h12" /></Btn>
            <Btn><Bars d="M2 9.500h20M5 14h12" /></Btn>
            <Btn><Bars d="M2 13.500h20M5 18h12" /></Btn>
            <Sep w={7} />
            <Tool icon={IMoney} w={30} /><Gap $w={2} /><Dd w={13} />
            <Tool icon={IPercent} /><Tool icon={INumber} /><Tool icon={IDate} />
            <Sep w={8} />
            <Tool icon={IDecAdd} /><Tool icon={IDecDel} />
            <Sep w={8} />
            <Tool icon={IIndent} /><Tool icon={IIndent} out />
            <Sep w={7} />
            <Tool icon={IBorder} w={31} /><Dd w={14} /><Tool icon={IPen} w={30} /><Dd w={14} /><Tool icon={IBorderColor} w={31} /><Dd w={13} />
            <Sep w={8} />
            <Tool icon={ICond} w={30} /><Dd w={16} />
          </Toolbar>

          <Middle>
            <Left>
              <Toolbar $h={34}>
                <Combo $w={157}><ComboText><Label w={24}>F17</Label></ComboText><ComboArrow><Caret /></ComboArrow></Combo>
                <Sep w={9} h={25} />
                <Gap $w={3} />
                <Btn $w={20}><Svg s={20}><Char t="f" x={1} y={15} size={19} w={7} /><Char t="x" x={8} y={17} size={16} w={9} /></Svg></Btn>
                <Btn $w={25}><ISigma /></Btn>
                <Dd />
                <Btn $w={28}><Svg s={12}><path d="M1 3.500h10M1 8.500h10" stroke="#555" strokeWidth="2.200" /></Svg></Btn>
                <Sep w={6} h={25} />
                <FormulaInput />
                <Gap $w={4} />
                <Caret />
              </Toolbar>
              <SheetArea>
                <SheetGrid>
                  <Head />
                  {columns.map((c) => <Head key={c} $on={c === "F"}>{c}</Head>)}
                  {Array.from({ length: 27 }, (_, i) => <SheetRow key={i} n={i + 1} />)}
                </SheetGrid>
                <VScroll />
              </SheetArea>
              <HScroll />
              <Tabs>
                <Gap $w={14} />
                <Svg s={11} h={16}><path d="M.5 0v16" stroke="#b0b0b0" /><path d="M9.500 0v16L1.500 8z" fill="#b4b4b4" /></Svg><Gap $w={13} />
                <Svg s={9} h={16}><path d="M8.500 0v16L0 8z" fill="#b4b4b4" /></Svg><Gap $w={16} />
                <Svg s={9} h={16}><path d="M.5 0v16L8 8z" fill="#b4b4b4" /></Svg><Gap $w={16} />
                <Svg s={11} h={16}><path d="M.5 0v16L8 8z" fill="#b4b4b4" /><path d="M10 0v16" stroke="#b0b0b0" /></Svg><Gap $w={17} />
                <Svg s={17}><path d="M8.500 0v17M0 8.500h17" stroke="#3a3a3a" strokeWidth="3" /></Svg>
                <Gap $w={10} />
                <Tab><Label w={37}>sheet1</Label></Tab>
              </Tabs>
            </Left>
            <Splitter><Grip /></Splitter>
            <Sidebar>
              <SideBtn $mb={3}><IGear /></SideBtn>
              <SideLine />
              <SideBtn><IProps /></SideBtn>
              <SideBtn><IStyles /></SideBtn>
              <SideBtn><IGallery /></SideBtn>
              <SideBtn $on><ICompass /></SideBtn>
              <SideBtn><IFx /></SideBtn>
            </Sidebar>
          </Middle>

          <Toolbar $h={38} $pb={2}>
            <Handle $after={12} />
            <Svg s={22}><circle cx="11" cy="11" r="10.500" fill="#dc3a44" stroke="#b8323a" /><path d="M7 7l8 8M15 7l-8 8" stroke="#fff" strokeWidth="2.600" /></Svg>
            <Gap $w={5} />
            <Combo $w={250}><ComboText $hint><Label w={30}>Find</Label></ComboText><ComboArrow><Caret /></ComboArrow></Combo>
            <Gap $w={9} />
            <Svg s={17}><path d="M8.500 16V4M2 9.500l6.500-7 6.500 7" stroke="#b4b4b4" strokeWidth="3.600" /></Svg><Gap $w={16} />
            <Svg s={17}><path d="M8.500 1v12M2 7.500l6.500 7 6.500-7" stroke="#b4b4b4" strokeWidth="3.600" /></Svg><Gap $w={10} />
            <FindAll><Label w={41}>Find All</Label></FindAll>
            <Gap $w={10} /><Check /><Gap $w={7} />
            <Label w={127}>Formatted Display</Label>
            <Gap $w={5} /><Check /><Gap $w={7} />
            <Label w={79}>Match Case</Label>
            <Sep w={13} />
            <Tool icon={IRefind} w={27} />
            <Sep w={14} />
          </Toolbar>

          <StatusBar>
            <Stat $w={174} $pl={10}><Label w={66}>Sheet 1 of 1</Label></Stat>
            <Stat $w={172} />
            <Stat $w={212} $pl={8}><Label w={98}>PageStyle_sheet1</Label></Stat>
            <Stat $w={190} $pl={2} $c><Label w={77}>English (India)</Label></Stat>
            <Stat $w={68} />
            <Stat $w={29} $c><Svg s={15} h={12}><path d="M1 1.500h5M3.500 1.500v9M1 10.500h5M8.500 8v2.500h6V8" stroke="#888" /></Svg></Stat>
            <Stat $w={29} $c><Svg s={13} h={12}><path d="M.5.500h12v11H.5z" fill="#eee" stroke="#999" /><path d="M5 2h3v3.500h2.500L6.500 10 2.500 5.500H5z" fill="#f58a1c" stroke="#c4590a" strokeWidth=".8" /></Svg></Stat>
            <Stat $w={29} />
            <Stat $w={207} $pl={2} $c><Label w={94}>Average: ; Sum: 0</Label></Stat>
            <Stat $w={142} $pl={8}>
              <Svg s={11}><path d="M1 5.500h9" stroke="#777" /></Svg>
              <Slider />
              <Svg s={9}><path d="M0 4.500h9M4.500 0v9" stroke="#777" /></Svg>
            </Stat>
            <Gap $w={5} />
            <StatEnd><Label w={31}>100%</Label></StatEnd>
          </StatusBar>
        </Win>
      </Below>
    </Screen>
  );
}
